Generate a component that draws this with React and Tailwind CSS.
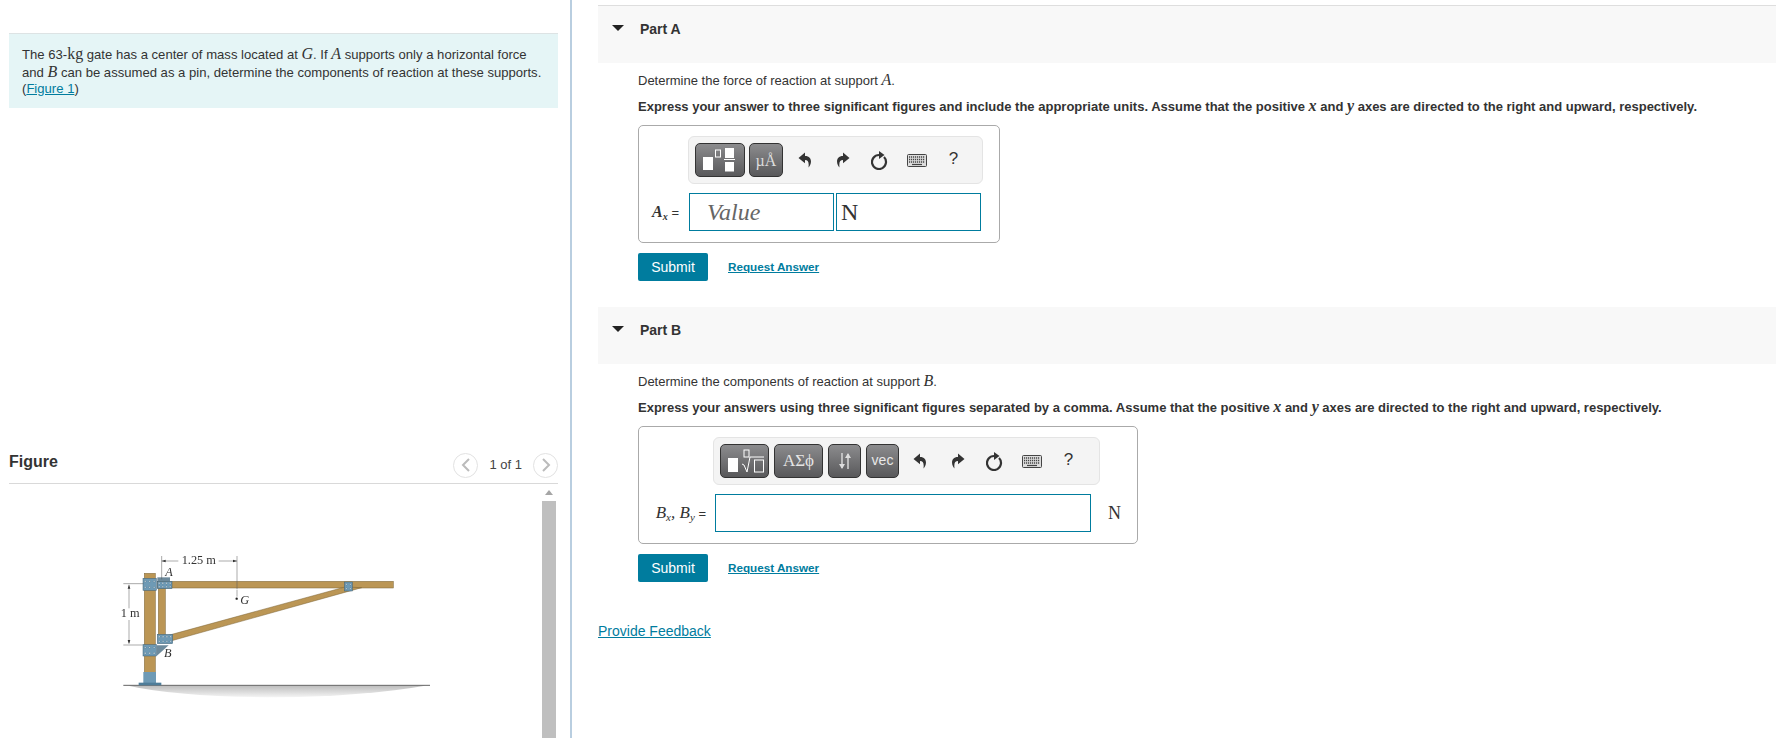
import React from "react";

const serif = { fontFamily: '"Liberation Serif", serif' };

const Mi = ({ children, b }) => (
  <span className={`italic text-[16px] ${b ? "font-bold" : ""}`} style={serif}>{children}</span>
);

function Btn({ w, children }) {
  return (
    <div className={`${w} h-[34px] rounded-[5px] border border-[#333] bg-gradient-to-b from-[#8c8c8e] to-[#59595b] flex items-center justify-center text-white shrink-0`}>
      {children}
    </div>
  );
}

const arrow = "M7 0.500L0.500 6L7 11.200V8C10 8 11.200 10 10.500 15.500C13.800 12.500 14.800 4 7 4Z";

function Undo() {
  return (
    <svg width="14" height="16" viewBox="0 0 14 16">
      <path d={arrow} fill="#333" />
    </svg>
  );
}

function Redo() {
  return (
    <svg width="14" height="16" viewBox="0 0 14 16" style={{ transform: "scaleX(-1)" }}>
      <path d={arrow} fill="#333" />
    </svg>
  );
}

function Reset() {
  return (
    <svg width="17" height="19" viewBox="0 0 17 19">
      <path d="M13 6.100A7 7 0 1 1 8 4" fill="none" stroke="#333" strokeWidth="2.200" />
      <path d="M8 0L13.500 4L8 8Z" fill="#333" />
    </svg>
  );
}

function Kb() {
  return (
    <svg width="20" height="13" viewBox="0 0 20 13">
      <rect x="0.500" y="0.500" width="19" height="12" rx="1" fill="#ddd" stroke="#444" />
      <path d="M2 3h16M2 5.500h16M2 8h16" stroke="#444" strokeWidth="1.300" strokeDasharray="1.200 0.800" />
      <path d="M5 10.500h10" stroke="#444" strokeWidth="1.200" />
    </svg>
  );
}

function Tools() {
  return (
    <>
      <div className="w-[37px] flex justify-center -ml-[1px] mr-[1px]"><Undo /></div>
      <div className="w-[37px] flex justify-center"><Redo /></div>
      <div className="w-[37px] flex justify-center"><Reset /></div>
      <div className="w-[37px] flex justify-center"><Kb /></div>
      <div className="w-[37px] flex justify-center text-[17px] leading-[20px] text-[#333] -mt-[2px]">?</div>
    </>
  );
}

function Head({ children, mt }) {
  return (
    <div className={`h-[57px] bg-[#f8f8f8] flex items-start ${mt}`}>
      <div className="w-[42px] pl-[14px] pt-[19px]">
        <div className="w-0 h-0 border-l-[6px] border-r-[6px] border-t-[6px] border-l-transparent border-r-transparent border-t-[#222]" />
      </div>
      <div className="text-[14px] font-bold text-[#333] pt-[14px] leading-[18px]">{children}</div>
    </div>
  );
}

function Actions() {
  return (
    <div className="flex items-center mt-[10px]">
      <div className="w-[70px] h-[28px] bg-[#007c9e] rounded-[2px] text-white text-[14px] flex items-center justify-center">Submit</div>
      <div className="ml-[20px] text-[11.700px] font-bold underline text-[#007c9e]">Request Answer</div>
    </div>
  );
}

function Plate({ x, y, w, h, cols, rows }) {
  const dots = [];
  for (let r = 0; r < rows; r++) {
    for (let c = 0; c < cols; c++) {
      dots.push(
        <circle
          key={`${r}-${c}`}
          cx={x + ((c + 0.5) * w) / cols}
          cy={y + ((r + 0.5) * h) / rows}
          r="2.500"
          fill="#dbe7ee"
          stroke="#3e5f73"
        />
      );
    }
  }
  return (
    <g>
      <rect x={x} y={y} width={w} height={h} fill="#6e9ab5" stroke="#3e5f73" strokeWidth="1.500" />
      {dots}
    </g>
  );
}

function Figure() {
  const wood = "#bb9655";
  return (
    <svg width="340" height="198" viewBox="0 0 1020 594" className="block blur-[0.4px]">
      <defs>
        <linearGradient id="g" x1="0" x2="0" y1="0" y2="1">
          <stop offset="0" stopColor="#bdbdbd" />
          <stop offset="1" stopColor="#f5f5f5" />
        </linearGradient>
      </defs>
      <path d="M85 437H975Q800 468 530 472Q230 470 85 437Z" fill="url(#g)" />
      <path d="M70 436H990" stroke="#444" strokeWidth="2.500" />
      <rect x="133" y="100" width="33" height="300" fill={wood} stroke="#7a6235" strokeWidth="1.500" />
      <rect x="175" y="125" width="21" height="170" fill={wood} stroke="#7a6235" strokeWidth="1.500" />
      <rect x="172" y="124" width="708" height="20" fill={wood} stroke="#7a6235" strokeWidth="1.500" />
      <path d="M205 286L735 141L785 143L212 303Z" fill={wood} stroke="#7a6235" strokeWidth="1.500" />
      <path d="M172 112H210V124H172Z" fill="#6d8a9c" />
      <path d="M170 348V316H206Z" fill="#6d8a9c" />
      <Plate x={129} y={115} w={40} h={36} cols={3} rows={2} />
      <Plate x={172} y={124} w={44} h={22} cols={4} rows={2} />
      <Plate x={172} y={283} w={46} h={28} cols={4} rows={2} />
      <Plate x={129} y={314} w={40} h={34} cols={3} rows={2} />
      <Plate x={733} y={126} w={24} h={27} cols={2} rows={2} />
      <rect x="130" y="396" width="38" height="33" fill="#6e9ab5" />
      <rect x="116" y="428" width="68" height="8" fill="#4f7d99" />
      <g fill="none" stroke="#555" strokeWidth="1.500">
        <path d="M185 48V118M411 48V148M411 150V170M70 131H130M70 315H128M185 63H235M356 63H411M87 134V205M87 240V310" />
      </g>
      <path d="M185 63l12-4v8zM411 63l-12-4v8zM87 134l-4 12h8zM87 312l-4-12h8z" fill="#333" />
      <circle cx="410" cy="176" r="3.500" fill="#222" />
      <g style={serif} fill="#333" fontSize="37">
        <text x="245" y="73">1.25 m</text>
        <text x="62" y="231">1 m</text>
        <text x="196" y="107" fontStyle="italic">A</text>
        <text x="421" y="192" fontStyle="italic">G</text>
        <text x="192" y="352" fontStyle="italic">B</text>
      </g>
    </svg>
  );
}

export default function App() {
  return (
    <div className="flex w-[1776px] h-[738px] overflow-hidden bg-white text-[#333]" style={{ fontFamily: '"Liberation Sans", Arial, sans-serif' }}>
      <div className="w-[572px] shrink-0 border-r-2 border-[#b9cee0] pl-[9px] pr-[12px] flex flex-col">
        <div className="mt-[33px] h-[75px] bg-[#e5f5f6] border-t border-[#dde3e4] pl-[13px] pt-[12px] text-[13.100px] leading-[16.500px] whitespace-nowrap">
          The 63-<span className="text-[16px]" style={serif}>kg</span> gate has a center of mass located at <Mi>G</Mi>. If <Mi>A</Mi> supports only a horizontal force<br />
          and <Mi>B</Mi> can be assumed as a pin, determine the components of reaction at these supports.<br />
          (<span className="underline text-[#007c9e]">Figure 1</span>)
        </div>
        <div className="mt-[341px] h-[35px] flex items-center border-b border-[#d9d9d9] pb-[2px]">
          <div className="text-[16px] font-bold text-[#333] flex-1 -mt-[6px]">Figure</div>
          <div className="w-[25px] h-[25px] rounded-full border border-[#e2e2e2] flex items-center justify-center">
            <svg width="10" height="14" viewBox="0 0 10 14"><path d="M8 1L2 7l6 6" fill="none" stroke="#bbb" strokeWidth="2" /></svg>
          </div>
          <div className="text-[13px] mx-[11px] text-[#444]">1 of 1</div>
          <div className="w-[25px] h-[25px] rounded-full border border-[#e2e2e2] flex items-center justify-center">
            <svg width="10" height="14" viewBox="0 0 10 14"><path d="M2 1l6 6-6 6" fill="none" stroke="#bbb" strokeWidth="2" /></svg>
          </div>
        </div>
        <div className="flex flex-1 min-h-0">
          <div className="flex-1 pl-[91px] pt-[56px]"><Figure /></div>
          <div className="w-[14px] mr-[2px] flex flex-col items-center">
            <div className="h-[17px] flex items-center justify-center">
              <div className="w-0 h-0 border-l-[4px] border-r-[4px] border-b-[5px] border-l-transparent border-r-transparent border-b-[#a5a5a5]" />
            </div>
            <div className="flex-1 w-[14px] bg-[#bfbfbf]" />
          </div>
        </div>
      </div>

      <div className="flex-1 pl-[26px] pt-[5px]">
        <div className="border-t border-[#dedede]">
          <Head>Part A</Head>
        </div>
        <div className="pl-[40px]">
          <div className="mt-[8px] text-[13px] leading-[18px]">Determine the force of reaction at support <Mi>A</Mi>.</div>
          <div className="mt-[7px] text-[13px] font-bold leading-[18px] whitespace-nowrap">Express your answer to three significant figures and include the appropriate units. Assume that the positive <Mi>x</Mi> and <Mi>y</Mi> axes are directed to the right and upward, respectively.</div>
          <div className="mt-[9px] w-[362px] h-[118px] rounded-[5px] border border-[#aaa] pt-[10px]">
            <div className="ml-[49px] w-[295px] h-[48px] rounded-[6px] bg-[#f4f4f4] border border-[#e4e4e4] flex items-center pl-[6px] gap-[4px]">
              <Btn w="w-[50px]">
                <svg width="48" height="32" viewBox="0 0 48 32">
                  <rect x="7" y="13" width="10" height="13" fill="#fff" />
                  <rect x="19.500" y="6" width="5" height="7" fill="none" stroke="#fff" />
                  <rect x="29" y="4" width="9" height="10" fill="#fff" />
                  <path d="M28 15.500h11" stroke="#fff" />
                  <rect x="29" y="18" width="9" height="9.500" fill="#fff" />
                </svg>
              </Btn>
              <Btn w="w-[34px]"><span className="text-[16px] text-[#ddd] mt-[1px]" style={serif}>µÅ</span></Btn>
              <div className="flex items-center"><Tools /></div>
            </div>
            <div className="flex items-center h-[38px] mt-[9px]">
              <div className="w-[40px] text-right text-[13px] shrink-0 whitespace-nowrap"><Mi b>A<sub className="text-[10px]">x</sub></Mi> =</div>
              <div className="ml-[10px] w-[145px] h-[38px] border border-[#007c9e] pl-[17px] text-[24px] italic text-[#666] flex items-center" style={serif}>Value</div>
              <div className="ml-[2px] w-[145px] h-[38px] border border-[#007c9e] pl-[4px] text-[24px] text-[#333] flex items-center" style={serif}>N</div>
            </div>
          </div>
          <Actions />
        </div>

        <Head mt="mt-[26px]">Part B</Head>
        <div className="pl-[40px]">
          <div className="mt-[8px] text-[13px] leading-[18px]">Determine the components of reaction at support <Mi>B</Mi>.</div>
          <div className="mt-[7px] text-[13px] font-bold leading-[18px] whitespace-nowrap">Express your answers using three significant figures separated by a comma. Assume that the positive <Mi>x</Mi> and <Mi>y</Mi> axes are directed to the right and upward, respectively.</div>
          <div className="mt-[9px] w-[500px] h-[118px] rounded-[5px] border border-[#aaa] pt-[10px]">
            <div className="ml-[74px] w-[387px] h-[48px] rounded-[6px] bg-[#f4f4f4] border border-[#e4e4e4] flex items-center pl-[6px] gap-[5px]">
              <Btn w="w-[49px]">
                <svg width="47" height="32" viewBox="0 0 47 32">
                  <rect x="7" y="13" width="10" height="14" fill="#fff" />
                  <rect x="23" y="5" width="5" height="7" fill="none" stroke="#fff" />
                  <path d="M21 19l2 1 3 7 3-15h14" fill="none" stroke="#fff" />
                  <rect x="33.500" y="15" width="9" height="12" fill="none" stroke="#fff" />
                </svg>
              </Btn>
              <Btn w="w-[49px]"><span className="text-[17px] text-[#e5e5e5]" style={serif}>ΑΣϕ</span></Btn>
              <Btn w="w-[33px]">
                <svg width="14" height="18" viewBox="0 0 14 18">
                  <path d="M4 1v15M10 2v15" stroke="#ddd" strokeWidth="1.400" />
                  <path d="M1 12l3 5 3-5zM7 6l3-5 3 5z" fill="#ddd" />
                </svg>
              </Btn>
              <Btn w="w-[33px]"><span className="text-[14px] text-[#e8e8e8] -mt-[2px]">vec</span></Btn>
              <div className="flex items-center -ml-[2px]"><Tools /></div>
            </div>
            <div className="flex items-center h-[38px] mt-[9px]">
              <div className="w-[67px] text-right text-[13px] shrink-0 whitespace-nowrap"><span className="italic text-[17px]" style={serif}>B<sub className="text-[11px]">x</sub>, B<sub className="text-[11px]">y</sub></span> =</div>
              <div className="ml-[9px] w-[376px] h-[38px] border border-[#007c9e] shrink-0" />
              <div className="ml-[17px] text-[18px]" style={serif}>N</div>
            </div>
          </div>
          <Actions />
        </div>
        <div className="mt-[40px] text-[14px] underline text-[#007c9e] leading-[18px]">Provide Feedback</div>
      </div>
    </div>
  );
}
